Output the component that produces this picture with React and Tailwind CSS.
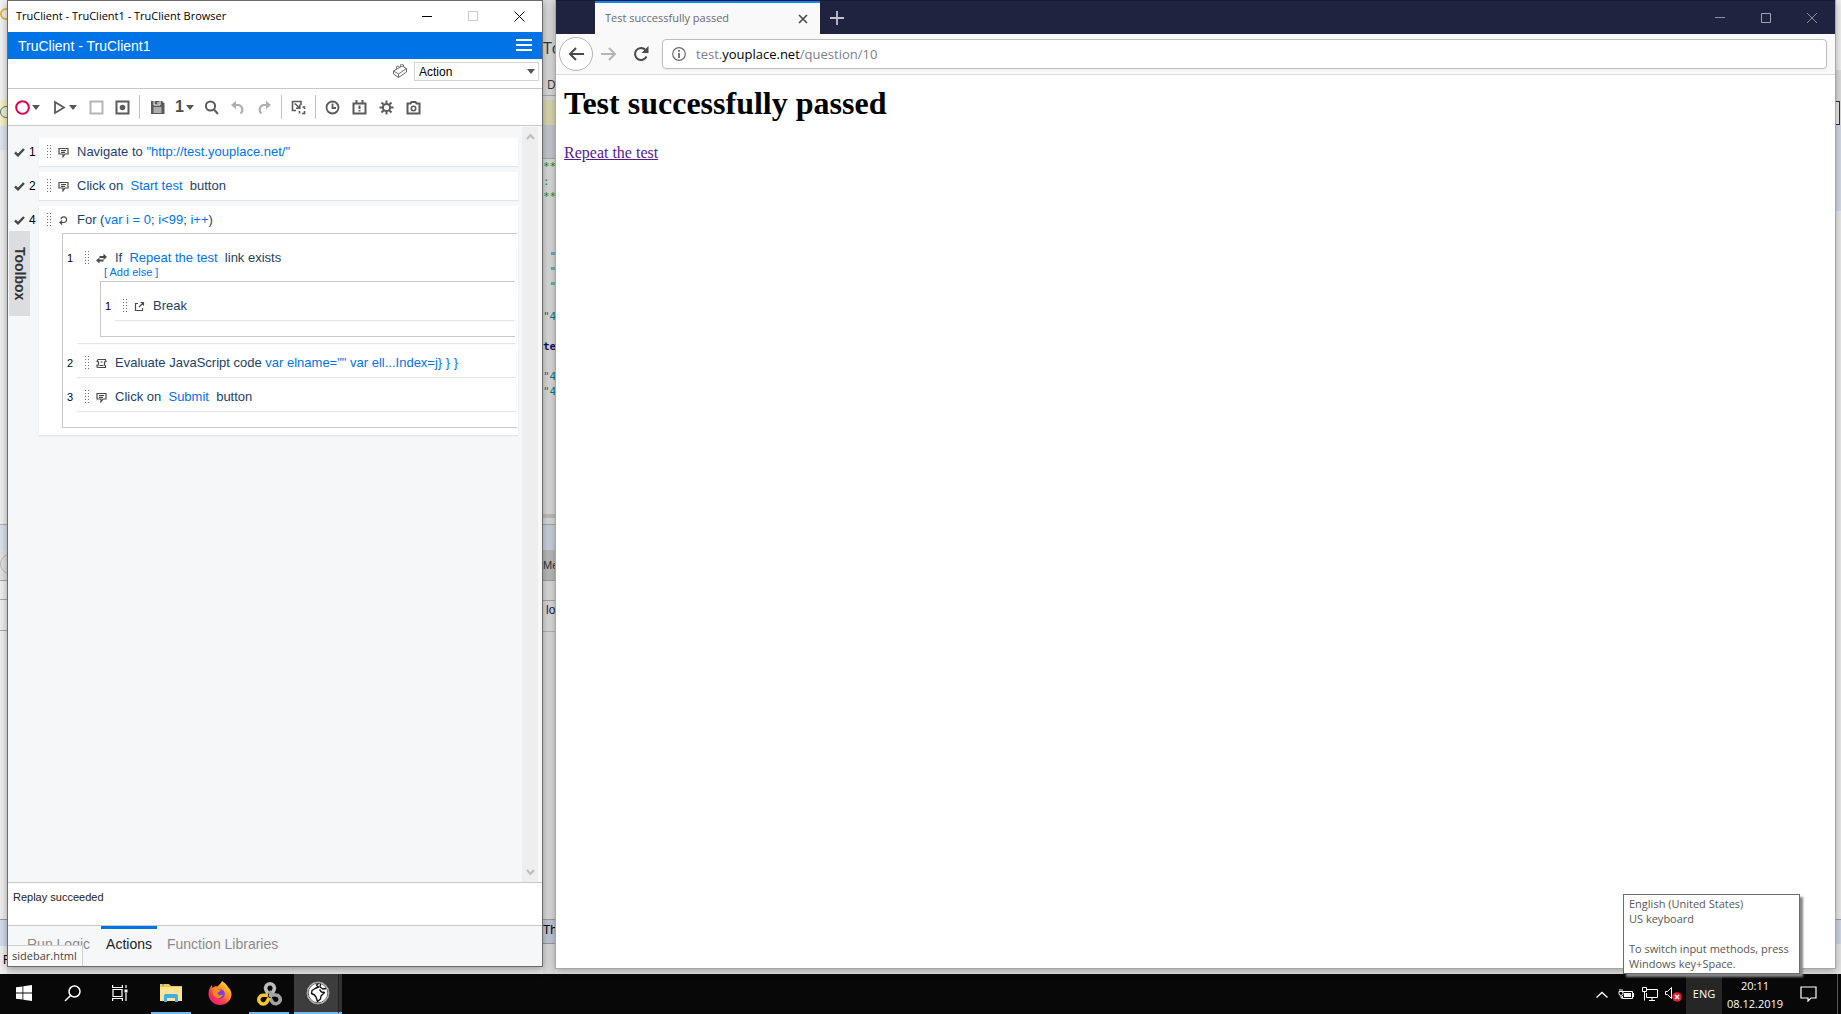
import React from "react";

const UI = "font-['Open_Sans','Noto_Sans',sans-serif]";
const SANS = "font-['Liberation_Sans',Arial,sans-serif]";

function Caret() {
  return (
    <svg width="8" height="5" viewBox="0 0 8 5" className="shrink-0">
      <path d="M0 0h8L4 5z" fill="#565656" />
    </svg>
  );
}

function Handle() {
  return (
    <svg width="5" height="14" viewBox="0 0 5 14" className="shrink-0" fill="#6f6f6f">
      {[0, 3, 6, 9, 12].map((y) => (
        <React.Fragment key={y}>
          <rect x="0" y={y} width="1" height="1" />
          <rect x="3" y={y} width="1" height="1" />
        </React.Fragment>
      ))}
    </svg>
  );
}

const glyph = {
  bubble: <path d="M1 1.500h9v5.500H7L5 9.800V7H1zM3 3.500h5M3 5.300h4" />,
  loop: <path d="M3 4.200a2.800 2.800 0 1 1 3.200 3.300H2M4.200 5.500 2 7.500l2.200 2" />,
  branch: (
    <g fill="#4a4a4a" stroke="none">
      <path d="M3.500 3H7.500V.5L11 4 7.500 7V5h-4z" />
      <path d="M7.500 6.500v2h-4v2L0 7.500 3.500 4.500v2z" />
    </g>
  ),
  exit: <path d="M4 2.500H1.500v7h7V7M5 6l4.500-4.500M6.500 1.500h3v3" />,
  script: <path d="M2 1.500h7.500l.5 2-1.500.5v3l1 .5v2H3L1 9V7h1.500V4L1 3.500zM4.500 4h2M3.500 7.500h4" />,
};

function Glyph({ name }) {
  return (
    <svg width="11" height="11" viewBox="0 0 11 11" fill="none" stroke="#4a4a4a" strokeWidth="1.200" className="shrink-0">
      {glyph[name]}
    </svg>
  );
}

function Check() {
  return (
    <svg width="11" height="9" viewBox="0 0 11 9" className="shrink-0" fill="none" stroke="#474747" strokeWidth="2.400">
      <path d="M1 4.500 4 7.300 10 1" />
    </svg>
  );
}

function Step({ icon, children }) {
  return (
    <div className="flex h-7 items-center whitespace-pre pl-2 text-[13px] text-[#1d3f66]">
      <Handle />
      <span className="ml-[5px] mr-2 flex w-3 justify-center">
        <Glyph name={icon} />
      </span>
      {children}
    </div>
  );
}

function Blue({ children }) {
  return <span className="text-[#0073e7]">{children}</span>;
}

function TopStep({ n, children }) {
  return (
    <li className="flex items-start">
      <div className="flex h-7 w-[31px] shrink-0 items-center gap-1 pl-1.5 text-xs text-black">
        <Check />
        <span>{n}</span>
      </div>
      <div className="min-w-0 flex-1 bg-white shadow-[0_1px_1px_#e2e4e6]">{children}</div>
    </li>
  );
}

function SubStep({ n, children }) {
  return (
    <li className="flex items-start">
      <span className="w-3.5 shrink-0 pl-1 text-[11px] leading-7 text-black">{n}</span>
      <div className="min-w-0 flex-1 bg-white shadow-[0_1px_1px_#e6e6e6]">{children}</div>
    </li>
  );
}

function Tool({ label, children, caret }) {
  return (
    <button aria-label={label} className="flex items-center gap-0.5">
      {children}
      {caret && <Caret />}
    </button>
  );
}

function Ico({ children, color = "#5b5b5b", w = 1.8 }) {
  return (
    <svg width="15" height="15" viewBox="0 0 15 15" fill="none" stroke={color} strokeWidth={w}>
      {children}
    </svg>
  );
}

function Toolbar() {
  return (
    <div className="flex h-[37px] items-center border-t border-[#c9c9c9] pl-[7px]" role="toolbar">
      <div className="flex w-[37px]">
        <Tool label="Record" caret>
          <Ico color="#e5004c" w={2}><circle cx="7.500" cy="7.500" r="6.300" /></Ico>
        </Tool>
      </div>
      <div className="flex w-9">
        <Tool label="Replay" caret>
          <Ico><path d="M3 2v11l9-5.500z" /></Ico>
        </Tool>
      </div>
      <div className="flex w-[27px] pl-px">
        <Tool label="Stop"><Ico color="#b5b5b5" w={2}><path d="M1.500 1.500h12v12h-12z" /></Ico></Tool>
      </div>
      <div className="flex w-6">
        <Tool label="Snapshot">
          <Ico w={2}><path d="M1.500 1.500h12v12h-12z" /><circle cx="7.500" cy="7.500" r="2.800" fill="#5b5b5b" stroke="none" /></Ico>
        </Tool>
      </div>
      <span className="mr-2.5 h-6 w-px bg-[#c4c4c4]" />
      <div className="flex w-[25px]">
        <Tool label="Save">
          <Ico w={1}>
            <path d="M1 1h11l2.500 2.500V14H1z" fill="#5b5b5b" stroke="none" />
            <path d="M4 1v4h6V1M3.500 8h8M3.500 10h8M3.500 12h8" stroke="#fff" />
            <path d="M8 2v2" stroke="#fff" />
          </Ico>
        </Tool>
      </div>
      <div className="flex w-[29px]">
        <Tool label="Step level" caret>
          <span className="text-base font-bold leading-none text-[#4d4d4d]">1</span>
        </Tool>
      </div>
      <div className="flex w-[26px]">
        <Tool label="Search"><Ico w={2}><circle cx="6.500" cy="6" r="4.600" /><path d="m10 9.500 4 4.500" /></Ico></Tool>
      </div>
      <div className="flex w-[27px]">
        <Tool label="Undo"><Ico color="#b0b0b0" w={2.2}><path d="M5 5h3.500a4.800 4.800 0 0 1 2 8.500" /><path d="M1 5 6 .8v8.400z" fill="#b0b0b0" stroke="none" /></Ico></Tool>
      </div>
      <div className="flex w-6">
        <Tool label="Redo"><Ico color="#b0b0b0" w={2.2}><path d="M10 5H6.500a4.800 4.800 0 0 0-2 8.500" /><path d="M14 5 9 .8v8.400z" fill="#b0b0b0" stroke="none" /></Ico></Tool>
      </div>
      <span className="mr-[9px] h-6 w-px bg-[#c4c4c4]" />
      <div className="flex w-6">
        <Tool label="Transactions">
          <Ico w={1.6}><path d="M10 5V1.500H1.500V10.500H5M3.500 4H5M4.500 4l4 4M5 8.300h3.800V4.500M11.500 7h2v2M13.500 11v2.500h-2.500M8.500 11v2.500" /></Ico>
        </Tool>
      </div>
      <span className="mr-[9px] h-6 w-px bg-[#c4c4c4]" />
      <div className="flex w-[27px]">
        <Tool label="Wait"><Ico><circle cx="7.500" cy="7.500" r="6" /><path d="M7.500 3.500v4.500H11" /></Ico></Tool>
      </div>
      <div className="flex w-[27px]">
        <Tool label="Events"><Ico w={2}><path d="M1.500 3.500h12v10h-12zM4.500 0v4M10.500 0v4M7.500 5.500v3.500M7.500 10v1.500" /></Ico></Tool>
      </div>
      <div className="flex w-[27px]">
        <Tool label="Settings">
          <Ico w={2}>
            <circle cx="7.500" cy="7.500" r="3.600" />
            <path d="M7.500 .5v3M7.500 11.500v3M.5 7.500h3M11.500 7.500h3M2.500 2.500l2 2M10.500 10.500l2 2M12.500 2.500l-2 2M4.500 10.500l-2 2" />
          </Ico>
        </Tool>
      </div>
      <Tool label="Camera">
        <Ico w={2}><path d="M1.500 3.500h3L5.500 2h4l1 1.500h3v10h-12z" /><circle cx="7.500" cy="8.500" r="2.200" strokeWidth="1.600" /></Ico>
      </Tool>
    </div>
  );
}

function Steps() {
  return (
    <ol className="flex min-w-0 flex-1 flex-col gap-1.5 pr-1 pt-3">
      <TopStep n="1">
        <Step icon="bubble">Navigate to <Blue>"http://test.youplace.net/"</Blue></Step>
      </TopStep>
      <TopStep n="2">
        <Step icon="bubble">Click on  <Blue>Start test</Blue>  button</Step>
      </TopStep>
      <TopStep n="4">
        <Step icon="loop">For (<Blue>var i = 0</Blue>; <Blue>i&lt;99</Blue>; <Blue>i++</Blue>)</Step>
        <div className="-mt-px pb-[7px] pl-[23px] pr-px">
          <ol className="flex flex-col gap-1.5 border-y border-l border-[#c9c9c9] pb-4 pr-px pt-2.5">
            <SubStep n="1">
              <Step icon="branch">If  <Blue>Repeat the test</Blue>  link exists</Step>
              <div className="pb-1.5 pl-[23px] pr-px">
                <button className="-mt-1 mb-1 ml-1 block h-[9px] text-[11px] leading-[9px] text-[#0073e7]">[ Add else ]</button>
                <ol className="border-y border-l border-[#c9c9c9] pb-4 pt-2.5">
                  <SubStep n="1">
                    <Step icon="exit">Break</Step>
                  </SubStep>
                </ol>
              </div>
            </SubStep>
            <SubStep n="2">
              <Step icon="script">Evaluate JavaScript code <Blue>var elname="" var ell...Index=j{"} } }"}</Blue></Step>
            </SubStep>
            <SubStep n="3">
              <Step icon="bubble">Click on  <Blue>Submit</Blue>  button</Step>
            </SubStep>
          </ol>
        </div>
      </TopStep>
    </ol>
  );
}

function TruClient() {
  return (
    <section className={`relative z-10 mb-[7px] flex w-[536px] shrink-0 flex-col border border-[#6b6b6b] bg-white shadow-[0_2px_8px_rgba(0,0,0,0.35)] ${SANS}`}>
      <header className="flex h-[31px] shrink-0 items-center">
        <h1 className={`flex-1 pl-2 text-[11px] text-black ${UI}`}>TruClient - TruClient1 - TruClient Browser</h1>
        <div className="flex items-center gap-9 pb-px pr-[17px]">
          <button aria-label="Minimize"><svg width="10" height="10"><path d="M0 5.500h10" stroke="#000" /></svg></button>
          <button aria-label="Maximize"><svg width="10" height="10"><path d="M.5.500h9v9h-9z" fill="none" stroke="#c8c8c8" /></svg></button>
          <button aria-label="Close"><svg width="11" height="11"><path d="m.5.500 10 10m0-10-10 10" stroke="#000" /></svg></button>
        </div>
      </header>
      <div className="flex h-[27px] shrink-0 items-center justify-between bg-[#0073e7] px-2.5 text-sm text-white">
        <span>TruClient - TruClient1</span>
        <button aria-label="Menu"><svg width="16" height="13"><path d="M0 1h16M0 6h16M0 11h16" stroke="#fff" strokeWidth="2" /></svg></button>
      </div>
      <div className="flex h-[29px] shrink-0 items-start justify-end gap-[7px] pr-[3px] pt-[3px]">
        <svg width="14" height="14" viewBox="0 0 14 14" fill="none" stroke="#6a6a6a" className="mt-0.5">
          <path d="M.5 7 9 2l4.500 2.500L5.500 10zM.5 7v3l5 3.500 8-5.500V4.500M5.500 10v3.500M3.500 5V3.500a1.500 1 0 0 1 3-.5v.5M7.500 3V1.500a1.500 1 0 0 1 3-.5v1.500" />
        </svg>
        <div className="relative flex w-[125px] items-center">
          <select aria-label="Action block" className={`h-[19px] w-full appearance-none border border-[#d4d4d4] bg-white pl-1 text-xs leading-none text-black ${SANS}`}>
            <option>Action</option>
          </select>
          <span className="pointer-events-none absolute right-1"><Caret /></span>
        </div>
      </div>
      <Toolbar />
      <main className="flex min-h-0 flex-1 border-t border-[#c9c9c9] bg-[#f5f7f9]">
        <div className="relative flex min-w-0 flex-1">
          <Steps />
          <button className="absolute left-px top-[105px] flex h-[85px] w-[21px] items-center justify-center bg-[#dcdddf] text-sm font-bold text-[#333] [writing-mode:vertical-rl]">
            Toolbox
          </button>
        </div>
        <div className="mr-1 mt-px flex w-4 flex-col items-center justify-between bg-[#eeeeee] py-1.5">
          <svg width="9" height="8"><path d="m1 6 3.500-4L8 6" fill="none" stroke="#bdbdbd" strokeWidth="2" /></svg>
          <svg width="9" height="8"><path d="m1 2 3.500 4L8 2" fill="none" stroke="#bdbdbd" strokeWidth="2" /></svg>
        </div>
      </main>
      <p className="h-[43px] shrink-0 border-t border-[#c9c9c9] pl-[5px] pt-1.5 text-[11px] text-[#222]">Replay succeeded</p>
      <footer className="relative flex h-[41px] shrink-0 items-stretch border-t border-[#c9c9c9] bg-[#f5f7f9] pl-3.5 text-sm text-[#8a8a8a]">
        <button className="px-[5px] pb-1">Run Logic</button>
        <button className="ml-1.5 border-t-3 border-[#0073e7] px-[5px] pb-[7px] text-[#222]">Actions</button>
        <button className="px-2.5 pb-1">Function Libraries</button>
        <div className={`absolute bottom-0 left-0 flex h-[21px] w-[75px] items-center border-r border-t border-[#d0d0d0] bg-[#f9f9f9] pl-1 text-[11px] text-[#444] ${UI}`}>
          sidebar.html
        </div>
      </footer>
    </section>
  );
}

function Browser() {
  return (
    <section className="relative mb-[5px] flex min-w-0 flex-1 flex-col border-b border-l border-r border-[#a6a6a6] bg-white shadow-[0_2px_8px_rgba(0,0,0,0.3)]">
      <div className={`flex h-[34px] shrink-0 items-stretch border-t border-[#181a33] bg-[#202340] pl-[39px] ${UI}`}>
        <div className="flex w-[225px] items-center justify-between border-t-2 border-[#0a84ff] bg-[#f9f9fa] pl-2.5 pr-3 text-[11px] text-[#6a6a70]">
          Test successfully passed
          <button aria-label="Close tab"><svg width="10" height="10"><path d="m1 1 8 8m0-8-8 8" stroke="#4b4b4f" strokeWidth="1.700" /></svg></button>
        </div>
        <button aria-label="New tab" className="ml-2.5"><svg width="14" height="14"><path d="M7 0v14M0 7h14" stroke="#c2c3cd" strokeWidth="1.800" /></svg></button>
        <div className="ml-auto flex items-center gap-9 pr-[18px]">
          <button aria-label="Minimize"><svg width="10" height="10"><path d="M0 4.500h10" stroke="#8d8e9e" /></svg></button>
          <button aria-label="Maximize"><svg width="10" height="10"><path d="M.5.500h9v9h-9z" fill="none" stroke="#a5a6b3" /></svg></button>
          <button aria-label="Close"><svg width="10" height="10"><path d="m0 0 10 10m0-10L0 10" stroke="#8d8e9e" /></svg></button>
        </div>
      </div>
      <div className="flex h-[41px] shrink-0 items-center border-b border-[#dcdcdc] bg-[#f9f9fa] pl-[3px] pr-2">
        <button aria-label="Back" className="flex size-[34px] items-center justify-center rounded-full border border-[#b4b4b6] bg-white">
          <svg width="16" height="14" fill="none" stroke="#4a4a4d" strokeWidth="2"><path d="M16 7H2M8 1 2 7l6 6" /></svg>
        </button>
        <button aria-label="Forward" className="ml-2"><svg width="16" height="14" fill="none" stroke="#b5b5b8" strokeWidth="2"><path d="M0 7h14M8 1l6 6-6 6" /></svg></button>
        <button aria-label="Reload" className="ml-4">
          <svg width="16" height="16" viewBox="0 0 16 16" fill="none" stroke="#4a4a4d" strokeWidth="2"><path d="M13.500 10.500A6 6 0 1 1 12.500 4" /><path d="M15.500 0v7h-7z" fill="#4a4a4d" stroke="none" /></svg>
        </button>
        <div className={`ml-[13px] flex h-[30px] min-w-0 flex-1 items-center rounded-sm border border-[#bebebe] bg-white shadow-[0_1px_3px_rgba(0,0,0,0.06)] ${UI}`}>
          <svg width="14" height="14" className="ml-[9px] mr-2.5 shrink-0" fill="none" stroke="#6b6b6e" strokeWidth="1.200"><circle cx="7" cy="7" r="6.300" /><path d="M7 6v5M7 3v1.700" strokeWidth="1.800" /></svg>
          <a href="#url" className="pt-0.5 text-[13px] text-[#808084]">test.<span className="text-black">youplace.net</span>/question/10</a>
        </div>
      </div>
      <article className="px-2 font-['Liberation_Serif','Times_New_Roman',serif] text-black">
        <h1 className="mt-2.5 text-[32px] font-bold leading-[37px]">Test successfully passed</h1>
        <a href="#repeat" className="mt-[22px] inline-block text-base leading-[18px] text-[#551a8b] underline">Repeat the test</a>
      </article>
    </section>
  );
}

function LeftStrip() {
  return (
    <div className="flex w-[7px] shrink-0 flex-col overflow-hidden bg-[#efefef]">
      <div className="h-[100px] shrink-0 overflow-hidden bg-[#f3f3f3] pt-2"><span className="block size-3 rounded-full border-2 border-[#e5b43a]" /></div>
      <div className="h-[26px] shrink-0 overflow-hidden bg-[#f4f2c8] pt-1.5"><span className="block size-3 rounded-full border border-[#5b6f96]" /></div>
      <div className="h-[24px] shrink-0 bg-[#dfe5f0]" />
      <div className="h-[374px] shrink-0" />
      <div className="h-[26px] shrink-0 border-t border-[#b0b0b0] bg-[#dbe1ec]" />
      <div className="h-[30px] shrink-0 overflow-hidden bg-[#e3e3e3] pt-1"><span className="block size-5 rounded-full border border-[#b8b8b8]" /></div>
      <div className="h-[20px] shrink-0 border-y border-[#a8a8a8]" />
      <div className="h-[31px] shrink-0 border-b border-[#a8a8a8]" />
      <div className="flex-1" />
      <div className="h-[27px] shrink-0 border-t border-[#9b9b9b] bg-[#d5dcea]" />
      <div className="h-[28px] shrink-0 pl-[3px] pt-1.5 font-['Liberation_Sans',sans-serif] text-xs text-black">F</div>
    </div>
  );
}

function MiddleStrip() {
  return (
    <div className="flex w-3 shrink-0 flex-col overflow-hidden whitespace-pre bg-[#dadada] text-[#0b7a7a] [&>*]:shrink-0">
      <div className={`h-[75px] pt-9 text-base leading-6 text-[#333] ${UI}`}>To</div>
      <div className={`h-[21px] border-b border-[#a8a8a8] pl-1 text-xs leading-5 text-[#333] ${UI}`}>D</div>
      <div className="mt-1 h-[25px] bg-[#d8d8b0]" />
      <div className="h-[34px] border-b border-[#aaa] bg-[#c5c8cc]" />
      <pre className="h-[355px] font-['DejaVu_Sans_Mono',monospace] text-[11px] leading-[15px]"><span className="text-[#1c8a1c]">{"**\n:\n**\n\n\n\n"}</span>{" \"\n \"\n \"\n\n\"4\n\n"}<b className="text-[#10106b]">te</b>{"\n\n\"4\n\"4"}</pre>
      <div className="h-[10px] border-t-4 border-[#bdbdbd]" />
      <div className="h-[26px] border-t border-[#a8a8a8] bg-[#cbd1dc]" />
      <div className={`h-[31px] border-b border-[#a0a0a0] bg-[#bababa] text-[11px] leading-[30px] text-[#333] ${SANS}`}>Me</div>
      <div className="h-[20px] border-b border-[#a8a8a8]" />
      <div className={`h-[31px] border-b border-[#b4b4b4] pl-[3px] pt-px text-xs text-[#16164a] ${SANS}`}>lo</div>
      <div className="min-h-0 !shrink grow" />
      <div className={`h-[25px] border-y border-[#9b9b9b] bg-[#bfc8d8] text-xs leading-5 text-black ${SANS}`}>Th</div>
      <div className="h-[30px]" />
    </div>
  );
}

function RightStrip() {
  return (
    <div className="flex w-[5px] shrink-0 flex-col bg-[#dddddd]">
      <div className="h-[70px] bg-[#f0f0f0]" />
      <div className="h-[31px]" />
      <div className="mr-px h-6 border-y border-r border-[#333] bg-[#ececec]" />
      <div className="h-[86px] bg-[#d3dae6]" />
      <div className="flex-1 bg-[#e9e9e9]" />
      <div className="h-[25px] border-t border-[#9b9b9b] bg-[#cfd7e5]" />
      <div className="h-[30px] bg-[#e4e4e4]" />
    </div>
  );
}

function TaskButton({ label, children, className = "" }) {
  return (
    <button aria-label={label} className={`flex h-full items-center justify-center border-b-2 ${className}`}>
      {children}
    </button>
  );
}

function Taskbar() {
  return (
    <nav className={`flex h-10 shrink-0 items-stretch bg-[#080808] text-white ${UI}`}>
      <TaskButton label="Start" className="w-12 border-transparent">
        <svg width="16" height="16" fill="#fff"><path d="M0 2.300 6.500 1.400v6.200H0zM7.300 1.300 16 0v7.600H7.300zM0 8.400h6.500v6.200L0 13.700zM7.300 8.400H16V16l-8.700-1.300z" /></svg>
      </TaskButton>
      <TaskButton label="Search" className="w-12 border-transparent">
        <svg width="17" height="17" fill="none" stroke="#fff" strokeWidth="1.500"><circle cx="10.500" cy="6.500" r="5.500" /><path d="M6.500 10.500 1 16" /></svg>
      </TaskButton>
      <TaskButton label="Task view" className="w-12 border-transparent">
        <svg width="16" height="16" fill="none" stroke="#fff" strokeWidth="1.200"><path d="M1 4.500h9v7H1zM.6 0v2.500h9.800V0M.6 16v-2.500h9.800V16M14 0v3M14 8v8" /><path d="M12.500 4.500h3v3h-3z" fill="#fff" stroke="none" /></svg>
      </TaskButton>
      <TaskButton label="File Explorer" className="mx-[7px] w-10 border-[#76b9ed]">
        <svg width="22" height="20" viewBox="0 0 22 20"><path d="M0 1h9l2 2h11v15H0z" fill="#f0c64d" /><path d="M0 4h22v14H0z" fill="#fde393" /><path d="M2 1h2v1.500H2z" fill="#3fb0e6" /><path d="M4 19v-6.500A1.500 1.500 0 0 1 5.500 11h11a1.500 1.500 0 0 1 1.500 1.500V19h-3v-4H7v4z" fill="#3fb0e6" /></svg>
      </TaskButton>
      <TaskButton label="Firefox" className="w-11 border-transparent">
        <svg width="24" height="24" viewBox="0 0 24 24">
          <defs>
            <linearGradient id="ff" x1="1" y1="0" x2="0.200" y2="1"><stop offset="0" stopColor="#fff44f" /><stop offset=".4" stopColor="#ff9a1f" /><stop offset=".75" stopColor="#ff3750" /><stop offset="1" stopColor="#e31587" /></linearGradient>
          </defs>
          <path d="M14 0c3 2 5 4 6 6 2 2 3.500 4 3.500 7.500C23.500 19 18.500 24 12 24S.5 19 .5 13C.5 9 2 6 4 4l.5 3C6 5.500 8 5 9.500 5.500 11 3.500 13 2.500 14 0z" fill="url(#ff)" />
          <circle cx="12" cy="13" r="4.800" fill="#7a3fe0" />
          <path d="M4.500 7c3-1.500 5 0 5.500 1.500l3 .5c-.5 2-3 1.500-3.500 3 0 2 3 3 5.500 1.500-1 3-4 4.500-7 3C5 15 4 11 4.500 7z" fill="#ff8a1c" />
        </svg>
      </TaskButton>
      <TaskButton label="Virtual User Generator" className="ml-[7px] w-10 border-[#76b9ed]">
        <svg width="25" height="25" viewBox="0 0 25 25" fill="none" strokeWidth="3.600">
          <path d="m11 12.500-2-3.500a4.400 4.400 0 1 1 8 0l-4 7" stroke="#bdbdbd" />
          <path d="M12 10.500 15 14h4a4.400 4.400 0 1 1-3.500 7.300L13 17" stroke="#a3a3a3" />
          <path d="M11 14.200H6a4.400 4.400 0 1 0 3.600 7.200l2.700-4.700" stroke="#f5c431" />
        </svg>
      </TaskButton>
      <TaskButton label="TruClient Browser" className="ml-[5px] w-11 border-[#76b9ed] bg-[#3d3d3d] pl-[3px]">
        <svg width="24" height="24" viewBox="0 0 24 24">
          <circle cx="12" cy="12" r="11" fill="#fff" stroke="#9a9a9a" />
          <circle cx="12" cy="12" r="9.800" fill="none" stroke="#3a3a3a" strokeWidth=".8" />
          <path d="M12.500 2.500 10.500 4l2 2-3.500 1.500-3 2-.5 3 3 1.500 1.500 2 1.500 4.500 3-2.500.5-3 3.500-3.500-3-.5-2-2.500M14.500 3l-.5 3 3 2 3-.5" fill="none" stroke="#111" strokeWidth="1.400" strokeLinejoin="round" />
        </svg>
      </TaskButton>
      <span className="w-[4px] border-b-2 border-l border-b-[#76b9ed] border-l-[#222] bg-[#333]" />
      <div className="ml-auto flex items-center">
        <button aria-label="Show hidden icons" className="mr-2.5"><svg width="12" height="7"><path d="m.5 6.500 5.500-5 5.500 5" fill="none" stroke="#fff" strokeWidth="1.300" /></svg></button>
        <svg width="16" height="12" fill="none" stroke="#fff" className="mr-2"><path d="M4.500 4.500V3.500H14.500V10.500H4.500V8M1 3.500h4v2a2 2 0 0 1-4 0zM2 1v2M4 1v2M3 8v2h1.500M15.500 5v4" /><path d="M6 5h7v4H6z" fill="#fff" stroke="none" /></svg>
        <svg width="16" height="14" fill="none" stroke="#fff" className="mr-[7px]"><path d="M5 2.500h10.500v8H4.500V6M7 13.500h6M10 10.500v3M.5.500h4v4h-4zM2.500 4.500v9" /></svg>
        <svg width="17" height="16" className="mr-1"><path d="M.5 5.500h2l4-4v11l-4-4h-2z" fill="none" stroke="#fff" /><circle cx="12" cy="11" r="4.800" fill="#e0202c" /><path d="m10 9 4 4m0-4-4 4" stroke="#fff" strokeWidth="1.300" /></svg>
        <button className="flex h-full w-9 items-center justify-center bg-[#262626] text-[11px]">ENG</button>
        <div className="w-[66px] pt-px text-center text-[11px] leading-[18px]"><div>20:11</div><div>08.12.2019</div></div>
        <button aria-label="Notifications" className="ml-3 mr-5"><svg width="17" height="16" fill="none" stroke="#fff" strokeWidth="1.200"><path d="M1 1h15v11h-5l-3 3v-3H1z" /></svg></button>
        <span className="mr-[3px] h-full w-px bg-[#555]" />
      </div>
    </nav>
  );
}

export default function App() {
  return (
    <div className="relative flex h-screen flex-col overflow-hidden bg-[#e4e4e4]">
      <div className="flex min-h-0 flex-1">
        <LeftStrip />
        <TruClient />
        <MiddleStrip />
        <Browser />
        <RightStrip />
      </div>
      <Taskbar />
      <div role="tooltip" className={`absolute bottom-10 right-[41px] z-20 w-[177px] border border-[#6b6b6b] bg-white pb-0.5 pl-[5px] pt-px text-[11px] leading-[15px] text-[#575757] shadow-[3px_3px_2px_#888] ${UI}`}>
        <p>English (United States)</p>
        <p>US keyboard</p>
        <p className="mt-[15px] whitespace-nowrap">To switch input methods, press</p>
        <p>Windows key+Space.</p>
      </div>
    </div>
  );
}
